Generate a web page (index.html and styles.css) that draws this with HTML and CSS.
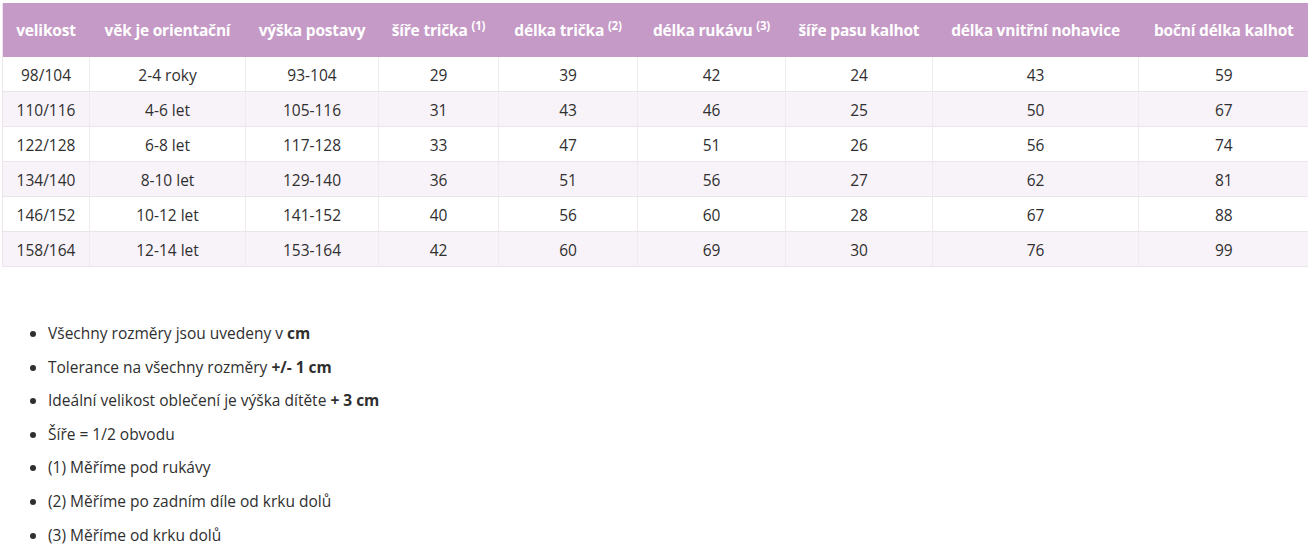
FILE: index.html
```html
<!DOCTYPE html>
<html lang="cs">
<head>
<meta charset="utf-8">
<title>Tabulka velikostí</title>
<link rel="stylesheet" href="styles.css">
</head>
<body>
<div class="page">
  <table class="sizes">
    <colgroup>
      <col class="c1"><col class="c2"><col class="c3"><col class="c4"><col class="c5">
      <col class="c6"><col class="c7"><col class="c8"><col class="c9">
    </colgroup>
    <thead>
      <tr>
        <th>velikost</th>
        <th>věk je orientační</th>
        <th>výška postavy</th>
        <th>šíře trička <sup>(1)</sup></th>
        <th>délka trička <sup>(2)</sup></th>
        <th>délka rukávu <sup>(3)</sup></th>
        <th>šíře pasu kalhot</th>
        <th>délka vnitřní nohavice</th>
        <th>boční délka kalhot</th>
      </tr>
    </thead>
    <tbody>
      <tr><td>98/104</td><td>2-4 roky</td><td>93-104</td><td>29</td><td>39</td><td>42</td><td>24</td><td>43</td><td>59</td></tr>
      <tr><td>110/116</td><td>4-6 let</td><td>105-116</td><td>31</td><td>43</td><td>46</td><td>25</td><td>50</td><td>67</td></tr>
      <tr><td>122/128</td><td>6-8 let</td><td>117-128</td><td>33</td><td>47</td><td>51</td><td>26</td><td>56</td><td>74</td></tr>
      <tr><td>134/140</td><td>8-10 let</td><td>129-140</td><td>36</td><td>51</td><td>56</td><td>27</td><td>62</td><td>81</td></tr>
      <tr><td>146/152</td><td>10-12 let</td><td>141-152</td><td>40</td><td>56</td><td>60</td><td>28</td><td>67</td><td>88</td></tr>
      <tr><td>158/164</td><td>12-14 let</td><td>153-164</td><td>42</td><td>60</td><td>69</td><td>30</td><td>76</td><td>99</td></tr>
    </tbody>
  </table>

  <ul class="notes">
    <li>Všechny rozměry jsou uvedeny v <strong>cm</strong></li>
    <li>Tolerance na všechny rozměry <strong>+/- 1 cm</strong></li>
    <li>Ideální velikost oblečení je výška dítěte <strong>+ 3 cm</strong></li>
    <li>Šíře = 1/2 obvodu</li>
    <li>(1) Měříme pod rukávy</li>
    <li>(2) Měříme po zadním díle od krku dolů</li>
    <li>(3) Měříme od krku dolů</li>
  </ul>
</div>
</body>
</html>
```

FILE: styles.css
```css
html, body {
  margin: 0;
  padding: 0;
  background: #ffffff;
}

body {
  font-family: "Open Sans", "Noto Sans", "Liberation Sans", sans-serif;
  font-size: 15.5px;
  color: #2f2f2f;
}

.page {
  padding: 3px 0 0 2px;
}

.sizes {
  width: 1306px;
  table-layout: fixed;
  border-collapse: collapse;
  border-left: 1px solid #ece6ec;
}

.c1 { width: 87px; }
.c2 { width: 156px; }
.c3 { width: 133px; }
.c4 { width: 120px; }
.c5 { width: 139px; }
.c6 { width: 148px; }
.c7 { width: 147px; }
.c8 { width: 206px; }
.c9 { width: 170px; }

.sizes th {
  background: #c59ac6;
  color: #ffffff;
  font-weight: 700;
  font-size: 15.5px;
  letter-spacing: -0.2px;
  height: 54px;
  padding: 0;
  text-align: center;
  white-space: nowrap;
  border-right: 1px solid #c59ac6;
}

.sizes th sup {
  font-size: 11.5px;
  vertical-align: 6px;
  line-height: 0;
}

.sizes td {
  height: 32px;
  padding: 2px 0 0 0;
  text-align: center;
  border-right: 1px solid #efeaef;
  border-bottom: 1px solid #ebe5eb;
  line-height: 20px;
}

.sizes td:last-child,
.sizes th:last-child {
  border-right: none;
}

.sizes tbody tr:nth-child(even) td {
  background: #f8f3f8;
}

.notes {
  margin: 54px 0 0 0;
  padding: 0 0 0 46px;
  list-style: disc;
}

.notes li {
  line-height: 25.6px;
  margin-bottom: 8px;
}

.notes strong {
  font-weight: 700;
}
```
